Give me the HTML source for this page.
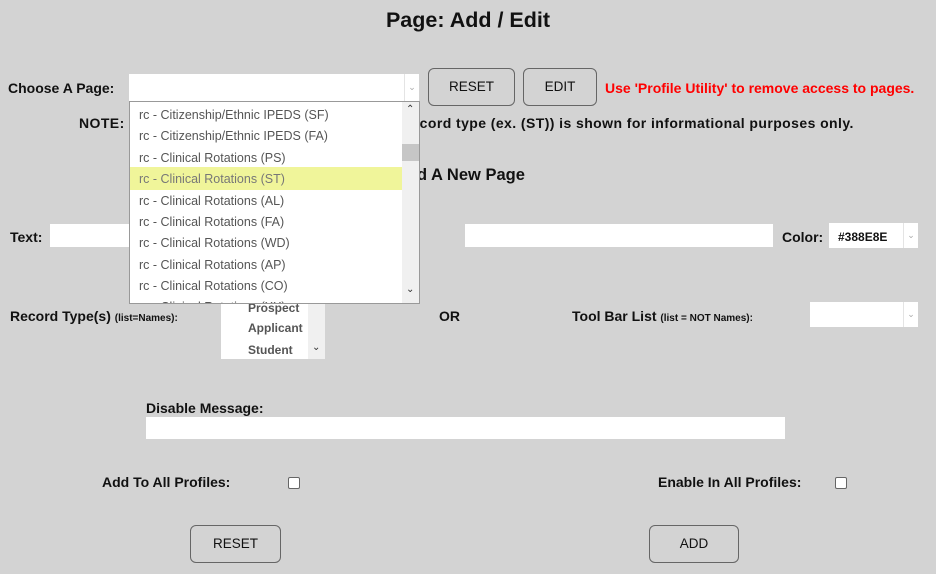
<!DOCTYPE html>
<html><head><meta charset="utf-8"><style>
body{margin:0;width:936px;height:574px;background:#d3d3d3;font-family:"Liberation Sans",sans-serif;position:relative;overflow:hidden;color:#111}
.a{position:absolute;white-space:nowrap}
.b{font-weight:bold;font-size:14px}
.in{position:absolute;background:#fff}
.btn{position:absolute;border:1px solid #666;border-radius:6px;background:#d3d3d3;font-size:13.5px;text-align:center;box-sizing:border-box}
.arr{position:absolute;right:0;top:0;bottom:0;width:14px;border-left:1px solid #e4e4e4;color:#aaa;font-size:9px;text-align:center}
.cb{position:absolute;width:10px;height:10px;border:1px solid #666;border-radius:2px;background:#fff}
.it{position:absolute;left:9px;font-size:12.5px;color:#555}
</style></head><body>
<div class="a" style="left:0;width:936px;text-align:center;top:8px;font-size:21.5px;font-weight:bold">Page: Add / Edit</div>
<div class="a b" style="left:8px;top:80px">Choose A Page:</div>
<div class="in" style="left:129px;top:74px;width:290px;height:27px"><div class="arr" style="line-height:27px">&#8964;</div></div>
<div class="btn" style="left:428px;top:68px;width:87px;height:38px;line-height:36px">RESET</div>
<div class="btn" style="left:523px;top:68px;width:74px;height:38px;line-height:36px">EDIT</div>
<div class="a b" style="left:605px;top:80px;color:#f00">Use 'Profile Utility' to remove access to pages.</div>
<div class="a b" style="left:79px;top:115px;letter-spacing:0.42px">NOTE: Pages list shows each available page. Record type (ex. (ST)) is shown for informational purposes only.</div>
<div class="a" style="left:395px;top:166px;font-size:16.5px;font-weight:bold">Add A New Page</div>
<div class="a b" style="left:10px;top:229px">Text:</div>
<div class="in" style="left:50px;top:224px;width:100px;height:23px"></div>
<div class="in" style="left:465px;top:224px;width:308px;height:23px"></div>
<div class="a b" style="left:782px;top:229px">Color:</div>
<div class="in" style="left:829px;top:223px;width:89px;height:25px"><div class="a" style="left:9px;top:7px;font-size:12px;font-weight:bold">#388E8E</div><div class="arr" style="line-height:25px">&#8964;</div></div>
<div class="a b" style="left:10px;top:308px">Record Type(s) <span style="font-size:10px">(list=Names):</span></div>
<div class="in" style="left:221px;top:296px;width:104px;height:63px;overflow:hidden">
<div class="a" style="left:27px;top:5px;font-size:12px;font-weight:bold;color:#555">Prospect</div>
<div class="a" style="left:27px;top:25px;font-size:12px;font-weight:bold;color:#555">Applicant</div>
<div class="a" style="left:27px;top:47px;font-size:12px;font-weight:bold;color:#555">Student</div>
<div style="position:absolute;right:0;top:0;width:17px;height:63px;background:#f0f0f0"><div class="a" style="left:4px;top:46px;font-size:10px;color:#333">&#8964;</div></div></div>
<div class="a b" style="left:439px;top:308px">OR</div>
<div class="a b" style="left:572px;top:308px">Tool Bar List <span style="font-size:10px">(list = NOT Names):</span></div>
<div class="in" style="left:810px;top:302px;width:108px;height:25px"><div class="arr" style="line-height:25px">&#8964;</div></div>
<div class="a b" style="left:146px;top:400px">Disable Message:</div>
<div class="in" style="left:146px;top:417px;width:639px;height:22px"></div>
<div class="a b" style="left:102px;top:474px">Add To All Profiles:</div>
<div class="cb" style="left:288px;top:477px"></div>
<div class="a b" style="left:658px;top:474px">Enable In All Profiles:</div>
<div class="cb" style="left:835px;top:477px"></div>
<div class="btn" style="left:190px;top:525px;width:91px;height:38px;line-height:36px">RESET</div>
<div class="btn" style="left:649px;top:525px;width:90px;height:38px;line-height:36px">ADD</div>
<div style="position:absolute;left:129px;top:101px;width:289px;height:201px;background:#fff;border:1px solid #999;overflow:hidden">
<div style="position:absolute;left:0;top:65px;width:272px;height:23px;background:#f0f59a"></div>
<div class="it" style="top:6px">rc - Citizenship/Ethnic IPEDS (SF)</div>
<div class="it" style="top:27px">rc - Citizenship/Ethnic IPEDS (FA)</div>
<div class="it" style="top:49px">rc - Clinical Rotations (PS)</div>
<div class="it" style="top:70px;color:#777">rc - Clinical Rotations (ST)</div>
<div class="it" style="top:92px">rc - Clinical Rotations (AL)</div>
<div class="it" style="top:113px">rc - Clinical Rotations (FA)</div>
<div class="it" style="top:134px">rc - Clinical Rotations (WD)</div>
<div class="it" style="top:156px">rc - Clinical Rotations (AP)</div>
<div class="it" style="top:177px">rc - Clinical Rotations (CO)</div>
<div class="it" style="top:198px">rc - Clinical Rotations (XX)</div>
<div style="position:absolute;right:0;top:0;width:17px;height:201px;background:#f0f0f0">
<div style="position:absolute;left:0;top:42px;width:17px;height:17px;background:#c6c6c6"></div>
<div class="a" style="left:4px;top:2px;font-size:10px;color:#333">&#8963;</div>
<div class="a" style="left:4px;top:182px;font-size:10px;color:#333">&#8964;</div></div>
</div>
</body></html>
